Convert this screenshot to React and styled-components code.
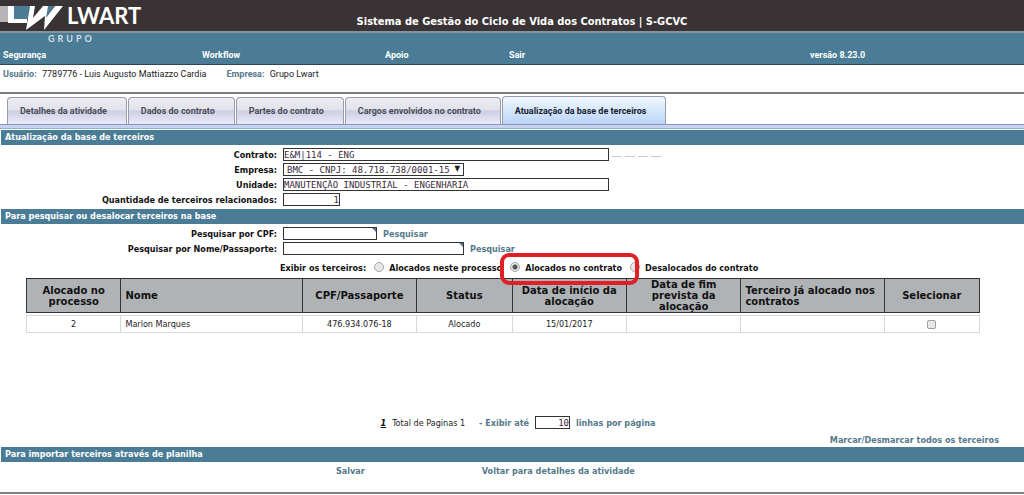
import React, { useState } from "react";
import styled, { createGlobalStyle, css } from "styled-components";

const teal = "#4a7c96";
const link = "#54798a";
const sans = `"DejaVu Sans Condensed", "DejaVu Sans", sans-serif`;
const narrow = `Roboto, Arial, sans-serif`;

const GlobalStyle = createGlobalStyle`
  * {
    box-sizing: border-box;
  }
  body {
    margin: 0;
    background: #fff;
    color: #222;
    font: 9px/12px ${sans};
  }
`;

const Header = styled.header`
  position: relative;
`;

const TitleBar = styled.div`
  display: flex;
  justify-content: center;
  align-items: flex-end;
  height: 33px;
  padding: 0 0 2px 20px;
  background: #393335;
  border-bottom: 2px solid #84959e;
`;

const Title = styled.h1`
  margin: 0;
  color: #fff;
  font-size: 11px;
  line-height: 14px;
`;

const Logo = styled.svg`
  position: absolute;
  top: 0;
  left: 0;
`;

const Menu = styled.nav`
  display: grid;
  grid-template-columns: 199fr 183fr 124fr 301fr 214fr;
  align-items: end;
  height: 32px;
  padding: 0 0 3px 3px;
  background: ${teal};
  border-bottom: 1px solid #2b4654;
`;

const MenuLink = styled.a`
  color: #fff;
  font: bold 9px/12px ${narrow};
  text-decoration: none;
`;

const UserBar = styled.div`
  display: flex;
  gap: 20px;
  height: 29px;
  padding: 3px;
  border-bottom: 2px solid #7b7b7b;
  font: 9px/12px ${narrow};

  b {
    margin-right: 3px;
    color: ${link};
  }
`;

const Tabs = styled.div`
  display: flex;
  align-items: flex-end;
  gap: 1px;
  height: 31px;
  padding-left: 7px;
  border-bottom: 1px solid #8f93b5;
`;

const Tab = styled.button`
  height: 27px;
  padding: 0 19px 0 12px;
  border: 1px solid #9a9cab;
  border-bottom: 0;
  border-radius: 4px 4px 0 0;
  background: linear-gradient(#ececf1, #e2e2ec 45%, #cdcee2 50%, #e9eafa);
  color: #4b4b55;
  font: bold 9px ${narrow};

  ${(p) =>
    p.$active &&
    css`
      height: 28px;
      background: linear-gradient(#f2f8ff, #d6e7fd 50%, #b9d3f8);
      color: #16202c;
    `}
`;

const TabStrip = styled.div`
  height: 4px;
  margin-bottom: 1px;
  background: #c6d4f2;
  border-bottom: 1px solid #8cb4cc;
`;

const Section = styled.h2`
  height: 15px;
  margin: 0 0 0 1px;
  padding-left: 4px;
  background: ${teal};
  color: #fff;
  font-size: 9px;
  line-height: 15px;
`;

const Form = styled.div`
  display: grid;
  gap: 2px;
  padding: 3px 0;
`;

const Row = styled.div`
  display: grid;
  grid-template-columns: 277px 1fr;
  align-items: center;
  gap: 6px;
  height: 13px;

  > label {
    color: #111;
    font-weight: bold;
    text-align: right;
  }
`;

const Cell = styled.div`
  display: flex;
  align-items: center;
  gap: 6px;
`;

const field = css`
  width: ${(p) => p.$width}px;
  height: 13px;
  margin: 0;
  padding: 0;
  border: 1px solid #333;
  border-radius: 0;
  background: #fff;
  color: #3a2a3a;
  font: 9px "DejaVu Sans Mono", monospace;
`;

const Input = styled.input`
  ${field}
  text-align: ${(p) => (p.$right ? "right" : "left")};
`;

const Select = styled.select`
  ${field}
  padding-left: 3px;
  appearance: none;
`;

const SelectWrap = styled.div`
  position: relative;

  &::after {
    content: "▼";
    position: absolute;
    right: 4px;
    top: 0;
    font-size: 8px;
    pointer-events: none;
  }
`;

const SearchWrap = styled.div`
  position: relative;
  display: flex;

  &::after {
    content: "";
    position: absolute;
    top: 1px;
    right: 1px;
    border: 2px solid transparent;
    border-top-color: ${link};
    border-right-color: ${link};
  }
`;

const Dashes = styled.span`
  display: flex;
  gap: 3px;
  margin-left: -3px;
  padding-top: 4px;

  i {
    width: 10px;
    border-top: 1px solid #c3ccd2;
  }
`;

const Link = styled.a`
  color: ${link};
  font-weight: bold;
  text-decoration: none;
`;

const Filter = styled.div`
  position: relative;
  display: flex;
  align-items: center;
  height: 20px;
  padding-left: 280px;
  color: #111;
  font-weight: bold;
`;

const Option = styled.label`
  display: flex;
  align-items: center;
  gap: 5px;
  margin-left: 8px;
`;

const Radio = styled.input`
  appearance: none;
  width: 10px;
  height: 10px;
  margin: 0 0 3px;
  border: 1px solid #a8a8a8;
  border-radius: 50%;
  background: #e6e6e6;

  &:checked {
    background: radial-gradient(circle, #555 0 2px, #e6e6e6 3px);
  }
`;

const Marker = styled.div`
  position: absolute;
  left: 500px;
  top: -5px;
  width: 139px;
  height: 32px;
  border: 4px solid #e01f26;
  border-radius: 9px;
  pointer-events: none;
`;

const TableArea = styled.div`
  min-height: 136px;
  padding: 0 44px 0 26px;
`;

const Table = styled.table`
  width: 100%;
  table-layout: fixed;
  border-spacing: 0;

  th,
  td {
    padding: 0 4px;
    text-align: center;
  }

  th {
    height: 35px;
    border: 1px solid #333;
    border-left-width: 0;
    background: #b0b3b5;
    color: #111;
    font: bold 10px/11px "DejaVu Sans", sans-serif;
  }

  td {
    height: 18px;
    border: 1px solid #d8d8d8;
    border-left-width: 0;
  }

  th:first-child,
  td:first-child {
    border-left-width: 1px;
  }

  th:nth-child(2),
  td:nth-child(2),
  th:nth-child(7) {
    text-align: left;
  }

  tbody::before {
    content: "";
    display: table-row;
    height: 2px;
  }
`;

const Checkbox = styled.input`
  appearance: none;
  display: block;
  width: 9px;
  height: 9px;
  margin: 0 auto;
  border: 1px solid #a0a0a0;
  border-radius: 2px;
  background: #e8e8e8;

  &:checked {
    background: #666;
  }
`;

const Pager = styled.div`
  display: flex;
  justify-content: center;
  align-items: center;
  gap: 6px;
  height: 17px;
  padding-left: 12px;
  color: ${link};
  font-weight: bold;

  > span {
    margin-right: 8px;
    color: #222;
    font-weight: normal;
  }
`;

const Page = styled.a`
  color: #111;
  font-style: italic;
`;

const MarkAll = styled.div`
  display: flex;
  justify-content: flex-end;
  padding: 3px 25px 1px;
`;

const Actions = styled.footer`
  display: flex;
  gap: 117px;
  height: 32px;
  padding: 3px 0 0 336px;
  border-bottom: 2px solid #808080;
`;

const menu = ["Segurança", "Workflow", "Apoio", "Sair", "versão 8.23.0"];

const tabs = [
  "Detalhes da atividade",
  "Dados do contrato",
  "Partes do contrato",
  "Cargos envolvidos no contrato",
  "Atualização da base de terceiros",
];

const filters = [
  "Alocados neste processo",
  "Alocados no contrato",
  "Desalocados do contrato",
];

const columns = [
  ["Alocado no processo", 10],
  ["Nome", 19],
  ["CPF/Passaporte", 12],
  ["Status", 10],
  ["Data de início da alocação", 12],
  ["Data de fim prevista da alocação", 12],
  ["Terceiro já alocado nos contratos", 15],
  ["Selecionar", 10],
];

const rows = [
  ["2", "Marlon Marques", "476.934.076-18", "Alocado", "15/01/2017", "", ""],
];

function App() {
  const [tab, setTab] = useState(4);
  const [filter, setFilter] = useState(1);

  return (
    <>
      <GlobalStyle />
      <Header>
        <TitleBar>
          <Title>Sistema de Gestão do Ciclo de Vida dos Contratos | S-GCVC</Title>
        </TitleBar>
        <Menu>
          {menu.map((item) => (
            <MenuLink key={item} href="#">
              {item}
            </MenuLink>
          ))}
        </Menu>
        <Logo width="150" height="46" viewBox="0 0 150 46" role="img" aria-label="Lwart Grupo">
          <path d="M0 6h8v16H0z" fill="#b5b3b5" />
          <path d="M13 6h17l-2 13H13z" fill="#4a7c96" />
          <path d="M43 6h11l-8 13z" fill="#4a7c96" />
          <path d="M8 6h6v13h13v4H8z" fill="#fff" />
          <path d="M30 6h5l-2 12L43 6h5l-2 12L55 6h8L44 30l1-14-19 14z" fill="#fff" />
          <text x="67" y="24" fill="#fff" fontFamily="Lato, sans-serif" fontWeight="bold" fontSize="22">
            LWART
          </text>
          <text x="48" y="42" fill="#d5dfe5" fontFamily="Lato, sans-serif" fontWeight="bold" fontSize="9" letterSpacing="3">
            GRUPO
          </text>
        </Logo>
      </Header>

      <UserBar>
        <span>
          <b>Usuário:</b> 7789776 - Luis Augusto Mattiazzo Cardia
        </span>
        <span>
          <b>Empresa:</b> Grupo Lwart
        </span>
      </UserBar>

      <Tabs>
        {tabs.map((name, i) => (
          <Tab key={name} $active={i === tab} onClick={() => setTab(i)}>
            {name}
          </Tab>
        ))}
      </Tabs>
      <TabStrip />

      <Section>Atualização da base de terceiros</Section>
      <Form>
        <Row>
          <label htmlFor="contrato">Contrato:</label>
          <Cell>
            <Input id="contrato" $width={326} defaultValue="E&M|114 - ENG" />
            <Dashes>
              <i />
              <i />
              <i />
              <i />
            </Dashes>
          </Cell>
        </Row>
        <Row>
          <label htmlFor="empresa">Empresa:</label>
          <Cell>
            <SelectWrap>
              <Select id="empresa" $width={181}>
                <option>BMC - CNPJ: 48.718.738/0001-15</option>
              </Select>
            </SelectWrap>
          </Cell>
        </Row>
        <Row>
          <label htmlFor="unidade">Unidade:</label>
          <Cell>
            <Input id="unidade" $width={326} defaultValue="MANUTENÇÃO INDUSTRIAL - ENGENHARIA" />
          </Cell>
        </Row>
        <Row>
          <label htmlFor="quantidade">Quantidade de terceiros relacionados:</label>
          <Cell>
            <Input id="quantidade" $width={57} $right defaultValue="1" />
          </Cell>
        </Row>
      </Form>

      <Section>Para pesquisar ou desalocar terceiros na base</Section>
      <Form>
        <Row>
          <label htmlFor="cpf">Pesquisar por CPF:</label>
          <Cell>
            <SearchWrap>
              <Input id="cpf" $width={94} />
            </SearchWrap>
            <Link href="#">Pesquisar</Link>
          </Cell>
        </Row>
        <Row>
          <label htmlFor="nome">Pesquisar por Nome/Passaporte:</label>
          <Cell>
            <SearchWrap>
              <Input id="nome" $width={181} />
            </SearchWrap>
            <Link href="#">Pesquisar</Link>
          </Cell>
        </Row>
      </Form>
      <Filter role="radiogroup" aria-label="Exibir os terceiros">
        Exibir os terceiros:
        {filters.map((name, i) => (
          <Option key={name}>
            <Radio type="radio" name="filtro" checked={i === filter} onChange={() => setFilter(i)} />
            {name}
          </Option>
        ))}
        <Marker />
      </Filter>

      <TableArea>
        <Table>
          <colgroup>
            {columns.map(([name, width]) => (
              <col key={name} width={`${width}%`} />
            ))}
          </colgroup>
          <thead>
            <tr>
              {columns.map(([name]) => (
                <th key={name}>{name}</th>
              ))}
            </tr>
          </thead>
          <tbody>
            {rows.map((row) => (
              <tr key={row[2]}>
                {row.map((value, i) => (
                  <td key={i}>{value}</td>
                ))}
                <td>
                  <Checkbox type="checkbox" aria-label="Selecionar" />
                </td>
              </tr>
            ))}
          </tbody>
        </Table>
      </TableArea>

      <Pager>
        <Page href="#">1</Page>
        <span>Total de Paginas 1</span>
        <label htmlFor="linhas">- Exibir até</label>
        <Input id="linhas" $width={35} $right defaultValue="10" />
        linhas por página
      </Pager>
      <MarkAll>
        <Link href="#">Marcar/Desmarcar todos os terceiros</Link>
      </MarkAll>

      <Section>Para importar terceiros através de planilha</Section>
      <Actions>
        <Link href="#">Salvar</Link>
        <Link href="#">Voltar para detalhes da atividade</Link>
      </Actions>
    </>
  );
}

export default App;
